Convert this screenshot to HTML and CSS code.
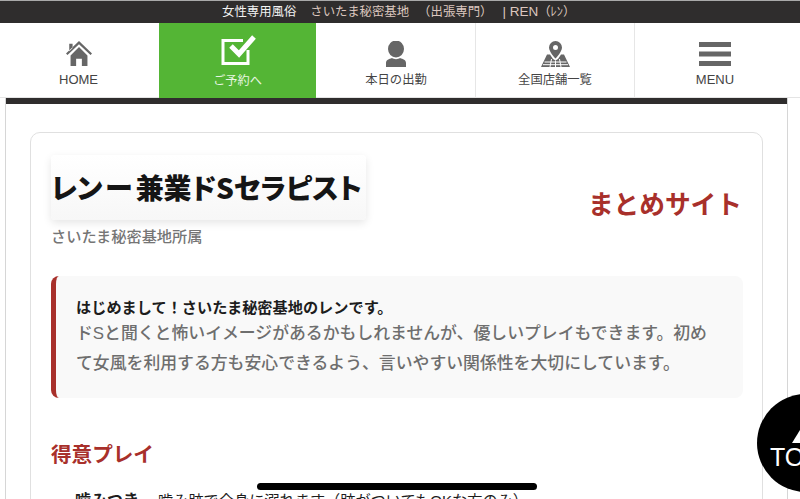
FILE: index.html
```html
<!DOCTYPE html>
<html lang="ja">
<head>
<meta charset="utf-8">
<title>REN</title>
<link rel="stylesheet" href="styles.css">
</head>
<body>
<header class="topbar"><span class="topbar-lead">女性専用風俗</span><span class="topbar-rest">さいたま秘密基地</span><span class="topbar-rest topbar-gap">（出張専門）</span><span class="topbar-rest topbar-ren">| REN<small class="topbar-kana">（ﾚﾝ）</small></span></header>
<nav class="nav">
  <a class="nav-item nav-w1">
    <svg class="icon icon-home" viewBox="0 0 28 28"><path fill="#666" d="M14 0 0 13.500l1.600 1.700L14 3.600l12.400 11.600 1.600-1.700zM3.500 3h3.600v4.500L3.500 11zM4.900 15.500 14 6.500l9.100 9V27h-6v-8h-6.200v8h-6z"/></svg>
    <span class="nav-label">HOME</span>
  </a>
  <a class="nav-item nav-w2 nav-active">
    <svg class="icon icon-check" viewBox="0 0 35 31"><path fill="none" stroke="#fff" stroke-width="3" d="M2 5.500h20M2 4V28.500h25V15"/><path fill="none" stroke="#fff" stroke-width="5" d="M10 11l8 8L33 2"/></svg>
    <span class="nav-label">ご予約へ</span>
  </a>
  <a class="nav-item nav-w3">
    <svg class="icon icon-person" viewBox="0 0 26 26"><ellipse cx="13" cy="8" rx="8" ry="8.500" fill="#666"/><path fill="#666" d="M3 26v-4c0-3 3-4 6-5 2 1.500 6 1.500 8 0 3 1 6 2 6 5v4z"/></svg>
    <span class="nav-label">本日の出勤</span>
  </a>
  <a class="nav-item nav-w4">
    <svg class="icon icon-map" viewBox="0 0 29 26"><path fill="#666" fill-rule="evenodd" d="M14.500 0a6.500 6.500 0 0 0-6.500 6.500C8 11 14.500 17.500 14.500 17.500S21 11 21 6.500A6.500 6.500 0 0 0 14.500 0zm0 4a2.500 2.500 0 1 1 0 5 2.500 2.500 0 0 1 0-5z"/><path fill="#666" d="M6 13.500h3l3 4.500 2.500 1.500L17 18l3-4.500h3L29 26H0z"/><path fill="none" stroke="#fff" stroke-width="1" d="M3.500 21h22M2 23.700h25M10.500 18 9 26M18.500 18l1.500 8M14.500 19.500V26"/></svg>
    <span class="nav-label">全国店舗一覧</span>
  </a>
  <a class="nav-item nav-w5">
    <svg class="icon icon-menu" viewBox="0 0 32 26"><path fill="#666" d="M0 1h32v5H0zM0 10.500h32v5H0zM0 20h32v5H0z"/></svg>
    <span class="nav-label">MENU</span>
  </a>
</nav>
<main class="page">
  <div class="page-rule"></div>
  <section class="card">
    <div class="head">
      <div class="head-left">
        <h1 class="title">レン ー 兼業ドSセラピスト</h1>
        <p class="sub">さいたま秘密基地所属</p>
      </div>
      <p class="matome">まとめサイト</p>
    </div>
    <div class="callout">
      <p class="callout-lead">はじめまして！さいたま秘密基地のレンです。</p>
      <p class="callout-body">ドSと聞くと怖いイメージがあるかもしれませんが、優しいプレイもできます。初めて女風を利用する方も安心できるよう、言いやすい関係性を大切にしています。</p>
    </div>
    <h2 class="section-title">得意プレイ</h2>
    <p class="play"><strong class="play-name">噛みつき</strong><span>噛み跡で全身に溺れます（跡がついてもOKな方のみ）</span></p>
  </section>
</main>
<div class="top-btn"><span class="top-arrow"></span><span class="top-text">TOP</span></div>
<div class="home-indicator"></div>
</body>
</html>
```
FILE: styles.css
```css
* { box-sizing: border-box; }
html, body { margin: 0; height: 499px; overflow: hidden; background: #fff; }
body { font-family: "Liberation Sans", "Noto Sans CJK JP", sans-serif; position: relative; }
p, h1, h2 { margin: 0; }

.topbar {
  height: 23px;
  background: #2f2d2d;
  border-top: 1px solid #a9a9a9;
  font-size: 12.400px;
  line-height: 21px;
  padding-left: 222px;
  white-space: nowrap;
}
.topbar-lead { color: #f2f2f2; margin-right: 14px; }
.topbar-rest { color: #dcc7bf; }
.topbar-gap { margin-left: 9px; }
.topbar-ren { margin-left: 10px; font-size: 13.500px; }
.topbar-kana { font-size: 12.400px; }

.nav { display: flex; height: 75px; background: #fff; box-shadow: inset 0 -1px 0 #e4e4e4; }
.nav-item {
  display: flex;
  flex-direction: column;
  align-items: center;
  justify-content: flex-start;
  padding-top: 18px;
  border-right: 1px solid #e6e6e6;
  color: #444;
}
.nav-w1 { width: 159px; border-right: 0; padding-right: 2px; }
.nav-w2 { width: 157px; border-right: 0; }
.nav-w3 { width: 160px; padding-left: 1px; }
.nav-w4 { width: 159px; }
.nav-w5 { width: 165px; border-right: 0; padding-right: 5px; }
.nav-active { background: #54b535; color: #e8f5e2; padding-top: 12px; }
.icon { width: 27px; height: 27px; display: block; }
.icon-home { width: 26px; height: 26px; }
.icon-check { width: 35px; height: 31px; margin-left: 2px; }
.icon-person { width: 26px; height: 26px; }
.icon-map { width: 29px; height: 26px; }
.icon-menu { width: 32px; height: 26px; }
.nav-label { font-size: 13px; line-height: 16px; margin-top: 5px; }
.nav-active .nav-label { margin-top: 7px; font-size: 12.200px; }
.nav-w3 .nav-label, .nav-w4 .nav-label { font-size: 12.300px; }

.page {
  margin: 0 12px 0 5px;
  border-left: 1px solid #d6d6d6;
  border-right: 1px solid #d6d6d6;
  padding: 0 24px;
  height: 401px;
  overflow: hidden;
}
.page-rule { height: 6px; background: #2f2d2d; margin: 0 -25px 28px; }

.card {
  border: 1px solid #e0e0e0;
  border-radius: 10px;
  padding: 22px 20px 0;
  height: 400px;
}
.head { display: flex; align-items: flex-start; justify-content: space-between; }
.title {
  width: 315px;
  height: 65px;
  border-radius: 4px;
  background: linear-gradient(#fff, #f7f7f7);
  box-shadow: 0 3px 8px rgba(0,0,0,.1);
  font-family: "Noto Sans CJK JP", "Liberation Sans", sans-serif;
  font-size: 28px;
  font-weight: 900;
  font-feature-settings: "palt";
  letter-spacing: -.15px;
  word-spacing: -3px;
  line-height: 65px;
  color: #151515;
  white-space: nowrap;
}
.sub { font-size: 15.200px; line-height: 20px; margin-top: 7px; color: #757575; font-weight: 500; }
.matome { font-size: 25.700px; font-weight: 700; color: #a8302b; line-height: 36px; margin: 32px 0 0 0; }

.callout {
  margin-top: 29px;
  width: 692px;
  height: 122px;
  background: #f9f9f9;
  border-left: 5px solid #a8302b;
  border-radius: 8px;
  padding: 21px 24px 0 20px;
}
.callout-lead { font-size: 15.200px; font-weight: 700; line-height: 21px; color: #1d1d1d; }
.callout-body { font-size: 16.850px; font-weight: 500; line-height: 30px; color: #6e6e6e; margin-top: 1px; }

.section-title { font-size: 20.600px; font-weight: 700; color: #a8302b; line-height: 30px; margin-top: 42px; }
.play { margin-top: 20px; padding-left: 24px; font-size: 15.200px; line-height: 22px; color: #1d1d1d; white-space: nowrap; }
.play-name { margin-right: 19px; font-size: 16px; }

.top-btn {
  position: absolute;
  left: 757px;
  top: 394px;
  width: 98px;
  height: 98px;
  border-radius: 50%;
  background: #000;
  color: #fff;
  overflow: hidden;
}
.top-arrow {
  position: absolute;
  left: 35px;
  top: 36px;
  width: 0;
  height: 0;
  border-left: 8px solid transparent;
  border-right: 8px solid transparent;
  border-bottom: 13px solid #fff;
}
.top-text { position: absolute; left: 13px; top: 49px; font-size: 25px; line-height: 28px; font-weight: 400; }

.home-indicator {
  position: absolute;
  left: 257px;
  top: 483px;
  width: 280px;
  height: 7px;
  border-radius: 4px;
  background: #000;
}
```
